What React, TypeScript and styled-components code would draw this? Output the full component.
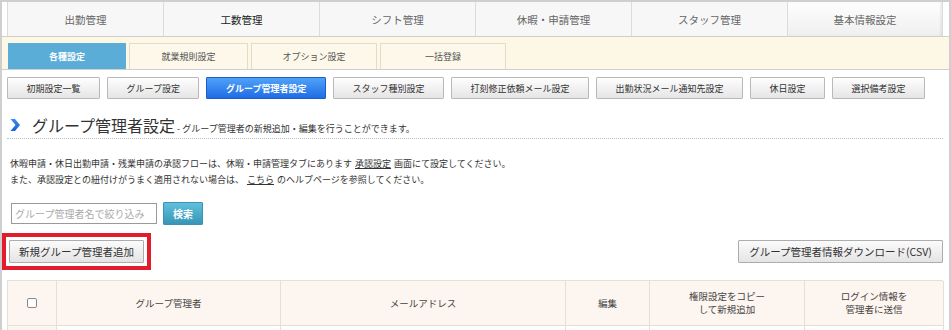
import React from 'react';
import styled, { createGlobalStyle } from 'styled-components';

const Global = createGlobalStyle`
  html, body { margin: 0; padding: 0; background: #fff; }
  body {
    font-family: "Noto Sans CJK JP", "Noto Sans", sans-serif;
    color: #333;
  }
  * { box-sizing: border-box; }
`;

const Frame = styled.div`
  width: 951px;
  height: 330px;
  border: 2px solid #cfcfcf;
  border-bottom: none;
  overflow: hidden;
`;

const MainNav = styled.nav`
  display: flex;
  height: 35px;
  padding: 0 5px;
  border-bottom: 1px solid #cfcfcf;
`;

const MainTab = styled.div<{ $active?: boolean; $strong?: boolean }>`
  width: 156px;
  display: flex;
  align-items: center;
  justify-content: center;
  border-left: 1px solid #dcdcdc;
  font-size: 10.5px;
  color: ${p => (p.$strong ? '#222' : '#666')};
  background: ${p => (p.$active ? 'linear-gradient(#fefefe, #efefef)' : '#f7f7f7')};
  box-shadow: ${p => (p.$active ? 'inset -2px 0 2px rgba(0,0,0,0.06)' : 'none')};
  &:last-child { border-right: 1px solid #dcdcdc; }
`;

const SubNav = styled.div`
  display: flex;
  align-items: flex-end;
  gap: 3px;
  height: 33px;
  padding: 6px 6px 0;
  background: #fdf7e6;
  border-bottom: 1px solid #cfcfcf;
`;

const SubTab = styled.div<{ $w: number; $active?: boolean }>`
  width: ${p => p.$w}px;
  height: 26px;
  display: flex;
  align-items: center;
  justify-content: center;
  font-size: 9px;
  font-weight: ${p => (p.$active ? 700 : 400)};
  color: ${p => (p.$active ? '#fff' : '#555')};
  background: ${p => (p.$active ? '#5aadd7' : '#fdf8ea')};
  border: 1px solid ${p => (p.$active ? '#5aadd7' : '#e3dccb')};
  border-bottom: none;
`;

const ButtonRow = styled.div`
  display: flex;
  gap: 7px;
  padding: 7px 5px 0;
`;

const SettingButton = styled.button<{ $active?: boolean }>`
  height: 22px;
  padding: 0 18.5px;
  border-radius: 1px;
  font-family: inherit;
  font-size: 9px;
  font-weight: ${p => (p.$active ? 700 : 400)};
  color: ${p => (p.$active ? '#fff' : '#333')};
  border: 1px solid ${p => (p.$active ? '#1b5ec8' : '#b9b9b9')};
  background: ${p =>
    p.$active ? 'linear-gradient(#4fa2f8, #1f6ce6)' : 'linear-gradient(#fefefe, #e5e5e5)'};
  white-space: nowrap;
`;

const TitleRow = styled.div`
  display: flex;
  align-items: baseline;
  margin: 16px 6px 0 5px;
  padding: 0 0 3px 3px;
  border-bottom: 1px dotted #bdbdbd;
`;

const Chevron = styled.svg`
  width: 10px;
  height: 12px;
  margin-right: 12px;
  align-self: center;
`;

const Title = styled.h1`
  margin: 0;
  font-size: 16px;
  line-height: 20px;
  font-weight: 400;
  color: #333;
`;

const Subtitle = styled.span`
  margin-left: 2px;
  font-size: 9px;
  line-height: 12px;
  color: #333;
`;

const Notice = styled.p`
  margin: 17px 0 0 8px;
  font-size: 9px;
  line-height: 16px;
  color: #333;
`;

const Link = styled.a`
  color: #333;
  text-decoration: underline;
  margin: 0 3px;
`;

const SearchRow = styled.div`
  display: flex;
  align-items: center;
  gap: 6px;
  margin: 14px 0 0 9px;
`;

const SearchInput = styled.input`
  width: 146px;
  height: 21px;
  padding: 0 3px;
  border: 1px solid #9a9a9a;
  font-family: inherit;
  font-size: 10px;
  color: #333;
  &::placeholder { color: #aaa; }
`;

const SearchButton = styled.button`
  width: 40px;
  height: 23px;
  border: 1px solid #3a93b3;
  border-radius: 1px;
  background: linear-gradient(#5fc0dc, #3995b6);
  color: #fff;
  font-family: inherit;
  font-size: 10px;
  font-weight: 700;
`;

const ActionRow = styled.div`
  display: flex;
  justify-content: space-between;
  align-items: center;
  margin-top: 8px;
  padding-right: 6px;
`;

const Highlight = styled.div`
  display: flex;
  border: 4px solid #e11d2b;
  padding: 3px;
`;

const PlainButton = styled.button<{ $w: number }>`
  width: ${p => p.$w}px;
  height: 23px;
  padding: 0;
  border: 1px solid #adadad;
  border-radius: 1px;
  background: linear-gradient(#fbfbfb, #e4e4e4);
  font-family: inherit;
  font-size: 10.5px;
  color: #333;
  white-space: nowrap;
`;

const Table = styled.div`
  margin: 10px 6px 0 5px;
  display: grid;
  grid-template-columns: 49px 224px 285px 84px 155px 139px;
  border-top: 1px solid #e9ded4;
  border-left: 1px solid #e9ded4;
`;

const HeadCell = styled.div`
  height: 45px;
  display: flex;
  align-items: center;
  justify-content: center;
  text-align: center;
  background: #fdf5ef;
  border-right: 1px solid #e9ded4;
  border-bottom: 1px solid #e9ded4;
  font-size: 9.5px;
  line-height: 13px;
  color: #444;
`;

const BodyCell = styled.div<{ $tint?: boolean }>`
  height: 40px;
  background: ${p => (p.$tint ? '#fdf5ef' : '#fff')};
  border-right: 1px solid #e9ded4;
  border-bottom: 1px solid #e9ded4;
`;

const CheckBox = styled.span`
  width: 10px;
  height: 10px;
  border: 1px solid #8a8a8a;
  border-radius: 2px;
  background: #fff;
`;

const mainTabs = ['出勤管理', '工数管理', 'シフト管理', '休暇・申請管理', 'スタッフ管理', '基本情報設定'];
const subTabs: [string, number][] = [
  ['各種設定', 118],
  ['就業規則設定', 119],
  ['オプション設定', 126],
  ['一括登録', 126],
];
const settingButtons = [
  '初期設定一覧',
  'グループ設定',
  'グループ管理者設定',
  'スタッフ種別設定',
  '打刻修正依頼メール設定',
  '出勤状況メール通知先設定',
  '休日設定',
  '選択備考設定',
];

export default function App() {
  return (
    <>
      <Global />
      <Frame>
        <MainNav>
          {mainTabs.map(t => (
            <MainTab key={t} $strong={t === '工数管理'} $active={t === '基本情報設定'}>
              {t}
            </MainTab>
          ))}
        </MainNav>
        <SubNav>
          {subTabs.map(([t, w], i) => (
            <SubTab key={t} $w={w} $active={i === 0}>
              {t}
            </SubTab>
          ))}
        </SubNav>
        <ButtonRow>
          {settingButtons.map(b => (
            <SettingButton key={b} $active={b === 'グループ管理者設定'}>
              {b}
            </SettingButton>
          ))}
        </ButtonRow>
        <TitleRow>
          <Chevron viewBox="0 0 10 12">
            <defs>
              <linearGradient id="chev" x1="0" y1="0" x2="0" y2="1">
                <stop offset="0" stopColor="#3c8cf0" />
                <stop offset="1" stopColor="#1660d4" />
              </linearGradient>
            </defs>
            <polygon points="0.5,0 5,0 10,6 5,12 0.5,12 5.5,6" fill="url(#chev)" />
          </Chevron>
          <Title>グループ管理者設定</Title>
          <Subtitle>- グループ管理者の新規追加・編集を行うことができます。</Subtitle>
        </TitleRow>
        <Notice>
          休暇申請・休日出勤申請・残業申請の承認フローは、休暇・申請管理タブにあります<Link>承認設定</Link>画面にて設定してください。
          <br />
          また、承認設定との紐付けがうまく適用されない場合は、<Link>こちら</Link>のヘルプページを参照してください。
        </Notice>
        <SearchRow>
          <SearchInput placeholder="グループ管理者名で絞り込み" />
          <SearchButton>検索</SearchButton>
        </SearchRow>
        <ActionRow>
          <Highlight>
            <PlainButton $w={135}>新規グループ管理者追加</PlainButton>
          </Highlight>
          <PlainButton $w={205}>グループ管理者情報ダウンロード(CSV)</PlainButton>
        </ActionRow>
        <Table>
          <HeadCell>
            <CheckBox />
          </HeadCell>
          <HeadCell>グループ管理者</HeadCell>
          <HeadCell>メールアドレス</HeadCell>
          <HeadCell>編集</HeadCell>
          <HeadCell>
            権限設定をコピー
            <br />
            して新規追加
          </HeadCell>
          <HeadCell>
            ログイン情報を
            <br />
            管理者に送信
          </HeadCell>
          <BodyCell $tint />
          <BodyCell />
          <BodyCell />
          <BodyCell />
          <BodyCell />
          <BodyCell />
        </Table>
      </Frame>
    </>
  );
}
